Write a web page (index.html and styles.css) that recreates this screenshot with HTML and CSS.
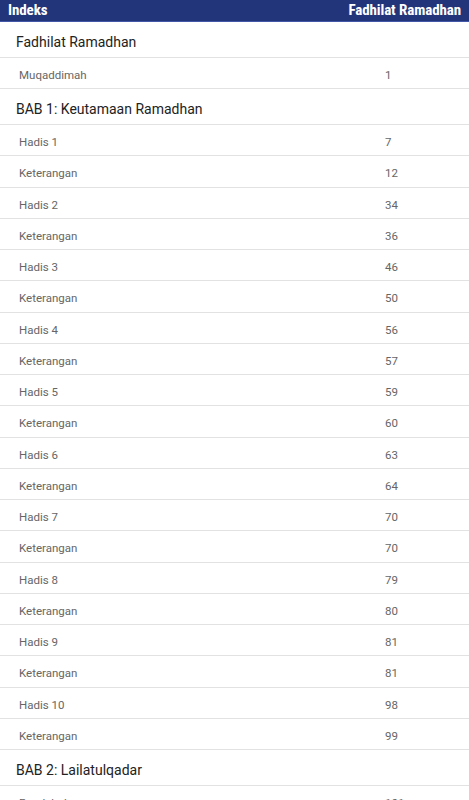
FILE: index.html
```html
<!DOCTYPE html>
<html>
<head>
<meta charset="utf-8">
<link rel="stylesheet" href="styles.css">
</head>
<body>
<header class="bar">
  <span class="bar-title">Indeks</span>
  <span class="bar-title">Fadhilat Ramadhan</span>
</header>
<main class="list">
  <div class="section">Fadhilat Ramadhan</div>
  <div class="item first"><span class="name">Muqaddimah</span><span class="page">1</span></div>
  <div class="section">BAB 1: Keutamaan Ramadhan</div>
  <div class="item"><span class="name">Hadis 1</span><span class="page">7</span></div>
  <div class="item"><span class="name">Keterangan</span><span class="page">12</span></div>
  <div class="item"><span class="name">Hadis 2</span><span class="page">34</span></div>
  <div class="item"><span class="name">Keterangan</span><span class="page">36</span></div>
  <div class="item"><span class="name">Hadis 3</span><span class="page">46</span></div>
  <div class="item"><span class="name">Keterangan</span><span class="page">50</span></div>
  <div class="item"><span class="name">Hadis 4</span><span class="page">56</span></div>
  <div class="item"><span class="name">Keterangan</span><span class="page">57</span></div>
  <div class="item"><span class="name">Hadis 5</span><span class="page">59</span></div>
  <div class="item"><span class="name">Keterangan</span><span class="page">60</span></div>
  <div class="item"><span class="name">Hadis 6</span><span class="page">63</span></div>
  <div class="item"><span class="name">Keterangan</span><span class="page">64</span></div>
  <div class="item"><span class="name">Hadis 7</span><span class="page">70</span></div>
  <div class="item"><span class="name">Keterangan</span><span class="page">70</span></div>
  <div class="item"><span class="name">Hadis 8</span><span class="page">79</span></div>
  <div class="item"><span class="name">Keterangan</span><span class="page">80</span></div>
  <div class="item"><span class="name">Hadis 9</span><span class="page">81</span></div>
  <div class="item"><span class="name">Keterangan</span><span class="page">81</span></div>
  <div class="item"><span class="name">Hadis 10</span><span class="page">98</span></div>
  <div class="item"><span class="name">Keterangan</span><span class="page">99</span></div>
  <div class="section">BAB 2: Lailatulqadar</div>
  <div class="item"><span class="name">Pendahuluan</span><span class="page">101</span></div>
</main>
</body>
</html>
```
FILE: styles.css
```css
html, body {
  margin: 0;
  padding: 0;
  background: #ffffff;
  font-family: Roboto, "Liberation Sans", sans-serif;
  overflow: hidden;
}

.bar {
  display: flex;
  justify-content: space-between;
  align-items: center;
  height: 21px;
  padding: 0 8px;
  background: #23357a;
  border-bottom: 1px solid #4257a8;
}

.bar-title {
  color: #ffffff;
  font-family: "Roboto Condensed", "Liberation Sans Narrow", "DejaVu Sans Condensed", Roboto, sans-serif;
  font-weight: 700;
  font-size: 15px;
  line-height: 21px;
  letter-spacing: -0.1px;
}

.list {
  display: flex;
  flex-direction: column;
}

.section {
  display: flex;
  align-items: center;
  box-sizing: content-box;
  height: 31px;
  padding: 4px 16px 0;
  border-bottom: 1px solid #e2e2e2;
  color: #222222;
  font-size: 14px;
}

.item {
  display: grid;
  grid-template-columns: 366px 1fr;
  align-items: center;
  box-sizing: content-box;
  height: 26.25px;
  padding: 4px 0 0 19px;
  border-bottom: 1px solid #e2e2e2;
  color: #666666;
  font-size: 11.5px;
}

.item.first {
  height: 26px;
}
```
